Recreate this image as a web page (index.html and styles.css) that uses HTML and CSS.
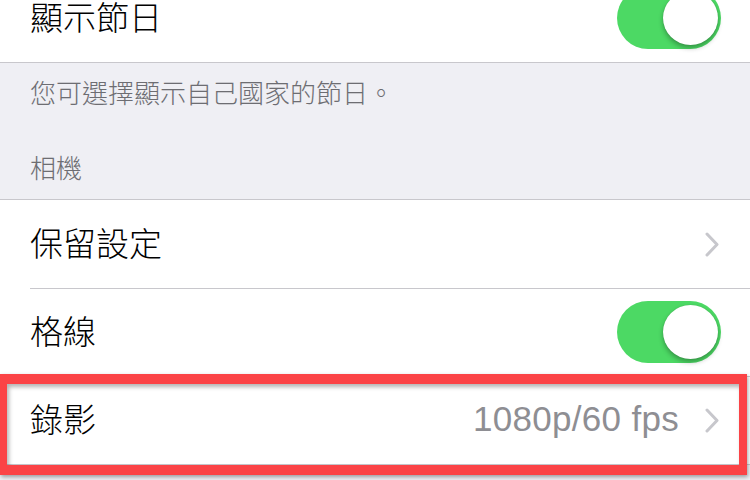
FILE: index.html
```html
<!DOCTYPE html>
<html lang="zh-Hant">
<head>
<meta charset="utf-8">
<link rel="stylesheet" href="styles.css">
</head>
<body>
<div class="group group-first">
  <div class="row">
    <span class="label">顯示節日</span>
    <span class="switch on"><span class="knob"></span></span>
  </div>
</div>
<div class="footer">您可選擇顯示自己國家的節日。</div>
<div class="header">相機</div>
<div class="group">
  <div class="row">
    <span class="label">保留設定</span>
    <svg class="chevron" viewBox="0 0 14 25" width="14" height="25"><polyline points="2,2 12,12.5 2,23" fill="none" stroke="#c7c7cc" stroke-width="3" stroke-linecap="round" stroke-linejoin="round"/></svg>
  </div>
  <div class="row">
    <span class="label">格線</span>
    <span class="switch on"><span class="knob"></span></span>
  </div>
  <div class="row row-highlighted">
    <span class="label">錄影</span>
    <span class="detail">1080p/60 fps</span>
    <svg class="chevron" viewBox="0 0 14 25" width="14" height="25"><polyline points="2,2 12,12.5 2,23" fill="none" stroke="#c7c7cc" stroke-width="3" stroke-linecap="round" stroke-linejoin="round"/></svg>
    <span class="highlight"></span>
  </div>
</div>
</body>
</html>
```
FILE: styles.css
```css
html, body {
  margin: 0;
  padding: 0;
  height: 100%;
  overflow: hidden;
}
body {
  background: #efeff4;
  font-family: "Noto Sans CJK TC", "Noto Sans", sans-serif;
}
.group {
  background: #fff;
  border-top: 1px solid #c8c7cc;
  border-bottom: 1px solid #c8c7cc;
}
.group-first {
  margin-top: -26px;
  border-top: none;
}
.row {
  position: relative;
  height: 88px;
  display: flex;
  align-items: center;
  padding: 0 29px 0 30px;
}
.row + .row::before {
  content: "";
  position: absolute;
  left: 30px;
  right: 0;
  top: 0;
  border-top: 1px solid #c8c7cc;
}
.label {
  flex: 1;
  font-size: 33px;
  font-weight: 300;
  line-height: 40px;
  padding-bottom: 5px;
  color: #000;
}
.footer {
  padding: 13px 30px 0;
  font-size: 26px;
  font-weight: 300;
  line-height: 32px;
  color: #6d6d72;
}
.header {
  padding: 43px 30px 16px;
  font-size: 26px;
  font-weight: 300;
  line-height: 32px;
  color: #6d6d72;
}
.switch {
  position: relative;
  width: 104px;
  height: 62px;
  border-radius: 31px;
  background: #4cd964;
  flex: none;
}
.knob {
  position: absolute;
  right: 3px;
  top: 4px;
  width: 55px;
  height: 54px;
  border-radius: 50%;
  background: #fff;
  box-shadow: 0 3px 5px rgba(0, 0, 0, 0.3), 0 0 1px rgba(0, 0, 0, 0.2);
}
.chevron {
  flex: none;
  margin-right: 2px;
}
.detail {
  font-family: "Liberation Sans", Arial, sans-serif;
  font-size: 35px;
  letter-spacing: 0.3px;
  color: #8e8e93;
  margin-right: 26px;
  padding-bottom: 2px;
}
.highlight {
  position: absolute;
  left: 0;
  right: 3px;
  top: -2px;
  bottom: -11px;
  border-style: solid;
  border-color: #fb4346;
  border-width: 10px 8px 10px 7px;
  box-shadow: 1px 2px 4px rgba(0, 0, 0, 0.35), inset 2px 3px 4px rgba(0, 0, 0, 0.3);
  pointer-events: none;
}
```
